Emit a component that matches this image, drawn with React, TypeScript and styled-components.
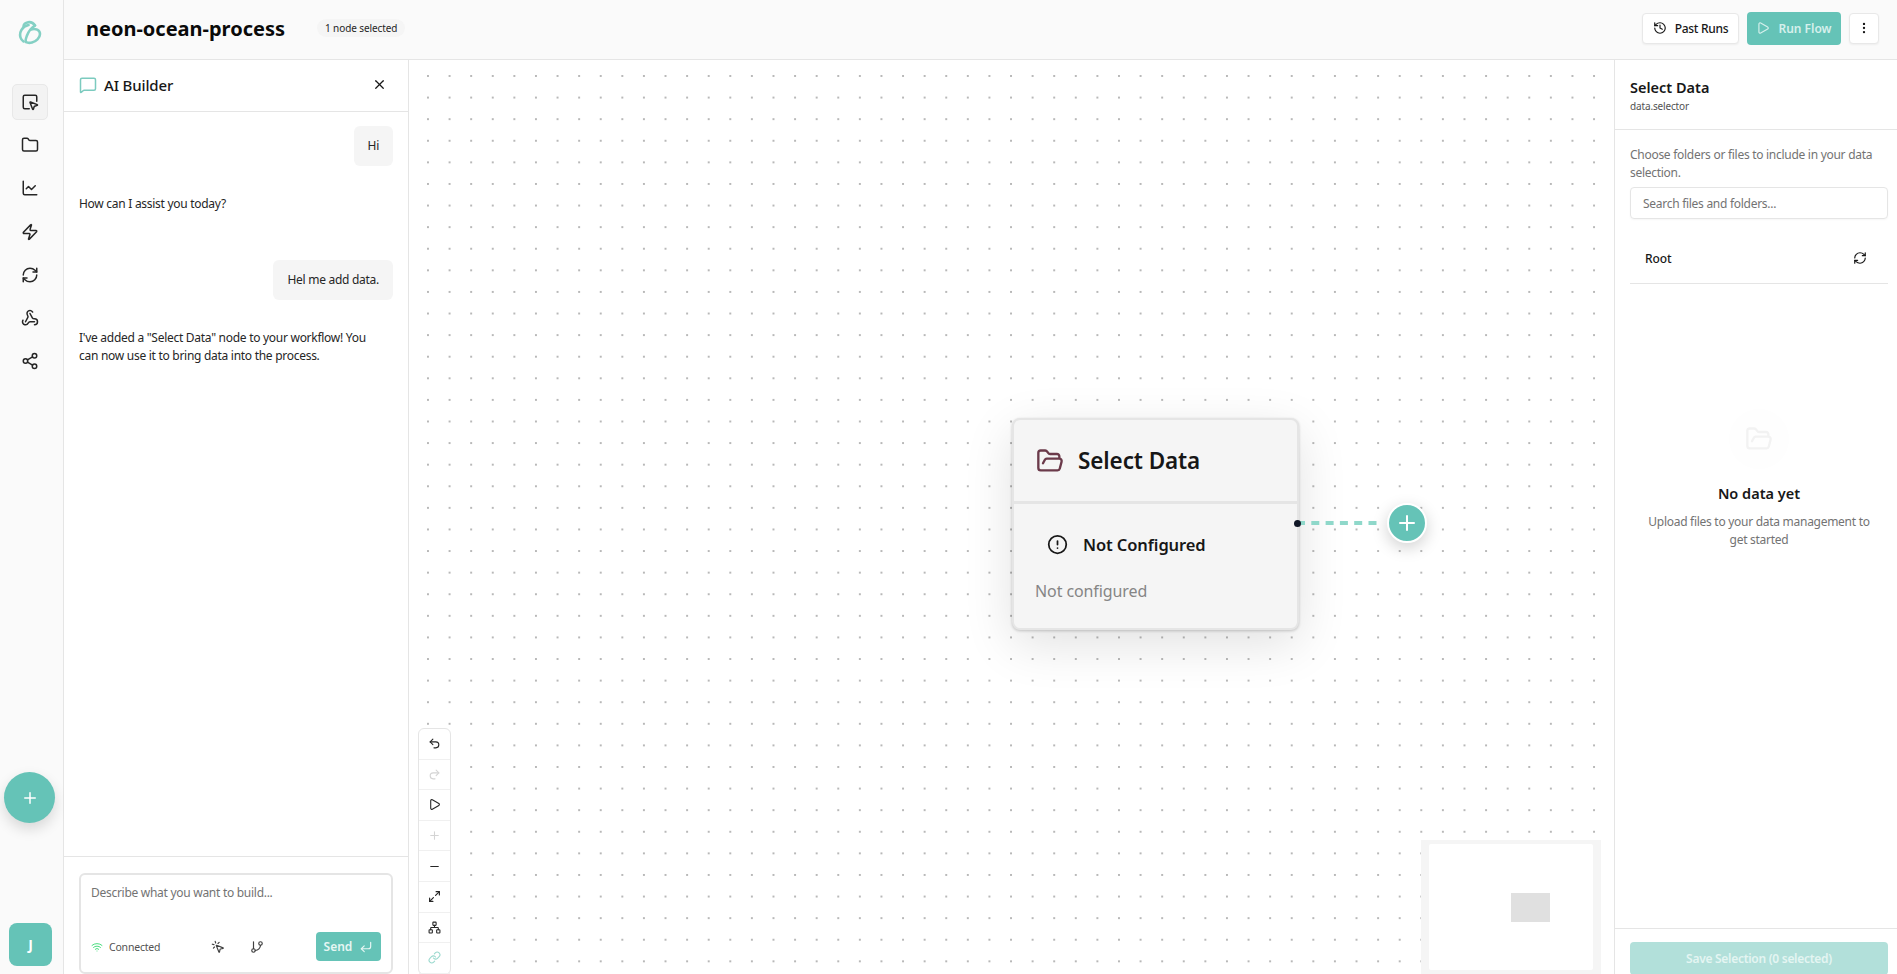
import React from "react"
import styled, { createGlobalStyle } from "styled-components"
import {
  ChartLine,
  CircleAlert,
  CornerDownLeft,
  EllipsisVertical,
  Folder,
  FolderOpen,
  GitBranch,
  History,
  Link,
  MessageSquare,
  Minus,
  MousePointerClick,
  Network,
  Play,
  Plus,
  Redo2,
  RefreshCw,
  Share2,
  SquareMousePointer,
  Undo2,
  Webhook,
  Wifi,
  X,
  Zap,
} from "lucide-react"

const teal = "#65c3b7"
const tight = "-0.28px"

const GlobalStyle = createGlobalStyle`
  html,
  body {
    margin: 0;
    height: 100%;
    overflow: hidden;
    background: #fff;
  }

  * {
    box-sizing: border-box;
  }

  body {
    font-family: "Noto Sans", "Open Sans", sans-serif;
    color: #171717;
  }
`

const Page = styled.div`
  display: flex;
  width: 1897px;
  height: 974px;
  overflow: hidden;
`

const Rail = styled.nav`
  flex: 0 0 64px;
  display: flex;
  flex-direction: column;
  align-items: center;
  background: #fafafa;
  border-right: 1px solid #e5e5e5;
  padding: 19px 0 8px;
`

const Logo = styled.svg`
  width: 24px;
  height: 26px;
  margin-bottom: 39px;
  margin-right: 4px;
`

const RailList = styled.div`
  display: flex;
  flex-direction: column;
  gap: 7.2px;
  margin-right: 3px;
`

const RailButton = styled.button<{ $active?: boolean }>`
  width: 36px;
  height: 36px;
  display: flex;
  align-items: center;
  justify-content: center;
  padding: 0;
  color: #262626;
  background: ${(p) => (p.$active ? "#f3f3f3" : "transparent")};
  border: 1px solid ${(p) => (p.$active ? "#e8e8e8" : "transparent")};
  border-radius: 5px;
`

const Fab = styled.button`
  width: 51px;
  height: 51px;
  margin-top: auto;
  margin-bottom: 100px;
  margin-right: 4px;
  display: flex;
  align-items: center;
  justify-content: center;
  padding: 0;
  color: #fff;
  background: ${teal};
  border: 0;
  border-radius: 50%;
  box-shadow: 0 6px 14px rgba(0, 0, 0, 0.14);
`

const Avatar = styled.div`
  width: 43px;
  height: 43px;
  flex: none;
  margin-right: 2px;
  display: flex;
  align-items: center;
  justify-content: center;
  font-size: 14px;
  font-weight: 700;
  color: #fff;
  background: ${teal};
  border-radius: 8px;
`

const Main = styled.div`
  flex: 1;
  min-width: 0;
  display: flex;
  flex-direction: column;
`

const TopBar = styled.header`
  flex: 0 0 60px;
  display: flex;
  align-items: center;
  padding: 0 18px 3px 22px;
  background: #fafafa;
  border-bottom: 1px solid #e5e5e5;
`

const FlowName = styled.h1`
  margin: 0;
  font-size: 20px;
  font-weight: 700;
  color: #0a0a0a;
`

const SelectionBadge = styled.span`
  margin: 0 0 1px 32px;
  padding: 2px 8px;
  font-size: 10px;
  letter-spacing: -0.1px;
  color: #262626;
  background: #f5f5f5;
  border-radius: 9px;
`

const TopActions = styled.div`
  margin-left: auto;
  display: flex;
  align-items: center;
  gap: 8px;
`

const OutlineButton = styled.button<{ $wide?: boolean }>`
  height: 31px;
  width: ${(p) => (p.$wide ? "97px" : "30px")};
  display: flex;
  align-items: center;
  justify-content: center;
  gap: 8px;
  padding: 0;
  font: 500 12px "Noto Sans", sans-serif;
  letter-spacing: ${tight};
  color: #171717;
  background: #fff;
  border: 1px solid #e8e8e8;
  border-radius: 4px;
  box-shadow: 0 1px 2px rgba(0, 0, 0, 0.05);
`

const RunButton = styled.button`
  width: 94px;
  height: 33px;
  display: flex;
  align-items: center;
  justify-content: center;
  gap: 8px;
  padding: 0;
  font: 600 12px "Noto Sans", sans-serif;
  color: #d6f0ec;
  background: ${teal};
  border: 0;
  border-radius: 4px;
`

const Workspace = styled.div`
  flex: 1;
  min-height: 0;
  display: flex;
`

const ChatPanel = styled.aside`
  flex: 0 0 345px;
  display: flex;
  flex-direction: column;
  background: #fff;
  border-right: 1px solid #e5e5e5;
`

const ChatHeader = styled.div`
  flex: 0 0 52px;
  display: flex;
  align-items: center;
  gap: 7px;
  padding: 0 21px 2px 15px;
  border-bottom: 1px solid #e5e5e5;
`

const ChatTitle = styled.h2`
  flex: 1;
  margin: 0;
  font-size: 15px;
  font-weight: 500;
  letter-spacing: -0.15px;
  color: #171717;
`

const Messages = styled.div`
  flex: 1;
  display: flex;
  flex-direction: column;
  padding: 14px 15px;
`

const UserBubble = styled.div`
  align-self: flex-end;
  padding: 10px 14px;
  height: 40px;
  font-size: 12px;
  letter-spacing: ${tight};
  line-height: 20px;
  color: #262626;
  background: #f5f5f5;
  border-radius: 6px;
`

const BotText = styled.p`
  margin: 29px 0 47px;
  max-width: 296px;
  font-size: 12px;
  letter-spacing: ${tight};
  line-height: 18px;
  color: #262626;
`

const Composer = styled.div`
  flex: 0 0 118px;
  padding: 16px 15px 0;
  border-top: 1px solid #e5e5e5;
`

const InputBox = styled.div`
  height: 101px;
  display: flex;
  flex-direction: column;
  justify-content: space-between;
  padding: 9px 10px 11px;
  border: 2px solid #e5e5e5;
  border-radius: 6px;
`

const Placeholder = styled.span`
  font-size: 12px;
  letter-spacing: ${tight};
  color: #737373;
`

const ComposerRow = styled.div`
  display: flex;
  align-items: center;
`

const Status = styled.span`
  width: 107px;
  display: flex;
  align-items: center;
  gap: 6px;
  font-size: 10.5px;
  letter-spacing: -0.2px;
  color: #525252;
`

const ComposerTool = styled.span`
  width: 39px;
  display: flex;
  justify-content: center;
  color: #404040;
`

const SendButton = styled.button`
  width: 65px;
  height: 29px;
  margin-left: auto;
  display: flex;
  align-items: center;
  justify-content: center;
  gap: 7px;
  padding: 0;
  font: 600 12px "Noto Sans", sans-serif;
  color: #e6f6f3;
  background: ${teal};
  border: 0;
  border-radius: 4px;
`

const Canvas = styled.main`
  position: relative;
  flex: 1;
  min-width: 0;
  overflow: hidden;
  background-color: #fff;
  background-image: radial-gradient(circle, #b8b8b8 0.9px, transparent 1.1px);
  background-size: 21.6px 21.6px;
  background-position: 8.2px 5.2px;
`

const Node = styled.div`
  position: absolute;
  left: 603px;
  top: 358px;
  width: 287px;
  height: 212px;
  display: flex;
  flex-direction: column;
  background: #f5f5f5;
  border: 2px solid #e5e5e5;
  border-radius: 8px;
  box-shadow: 0 1px 3px rgba(0, 0, 0, 0.2), 0 14px 50px rgba(0, 0, 0, 0.12);
`

const NodeHeader = styled.div`
  flex: 0 0 84px;
  display: flex;
  align-items: center;
  gap: 14px;
  padding: 0 22px;
  border-bottom: 3px solid #e5e5e5;
`

const NodeTitle = styled.span`
  font-size: 22.5px;
  font-weight: 600;
  letter-spacing: -0.1px;
  color: #171717;
`

const NodeStatus = styled.div`
  display: flex;
  align-items: center;
  gap: 15px;
  padding: 29px 33px 0;
  font-size: 16.5px;
  font-weight: 600;
  letter-spacing: -0.1px;
  color: #171717;
`

const NodeNote = styled.div`
  padding: 24px 21px 0;
  font-size: 16px;
  letter-spacing: -0.1px;
  color: #858585;
`

const EdgeLine = styled.svg`
  position: absolute;
  left: 888px;
  top: 459px;
  width: 82px;
  height: 8px;
`

const Handle = styled.span`
  position: absolute;
  left: 885px;
  top: 460px;
  width: 7px;
  height: 7px;
  background: #111827;
  border-radius: 50%;
`

const AddNode = styled.button`
  position: absolute;
  left: 978px;
  top: 443px;
  width: 40px;
  height: 40px;
  display: flex;
  align-items: center;
  justify-content: center;
  padding: 0;
  color: #fff;
  background: ${teal};
  border: 2px solid #fff;
  border-radius: 50%;
  box-shadow: 0 5px 16px rgba(0, 0, 0, 0.18);
`

const CanvasTools = styled.div`
  position: absolute;
  left: 9px;
  top: 668px;
  width: 33px;
  background: #fff;
  border: 1px solid #e5e5e5;
  border-radius: 6px;
`

const CanvasTool = styled.div<{ $tone?: string }>`
  height: 30.6px;
  display: flex;
  align-items: center;
  justify-content: center;
  color: ${(p) => p.$tone || "#262626"};
  border-bottom: 1px solid #f0f0f0;
`

const MiniMap = styled.div`
  position: absolute;
  right: 13px;
  bottom: 0;
  width: 180px;
  height: 134px;
  padding: 4px 8px;
  background: #f5f5f5;
`

const MiniMapSheet = styled.div`
  position: relative;
  height: 100%;
  background: #fff;
  border-radius: 2px;
`

const MiniMapNode = styled.div`
  position: absolute;
  left: 82px;
  top: 49px;
  width: 39px;
  height: 29px;
  background: #e0e0e0;
`

const Inspector = styled.aside`
  flex: 0 0 283px;
  display: flex;
  flex-direction: column;
  background: #fff;
  border-left: 1px solid #e5e5e5;
`

const InspectorHeader = styled.div`
  flex: 0 0 70px;
  padding: 17px 15px 0;
  border-bottom: 1px solid #e5e5e5;
`

const InspectorTitle = styled.h2`
  margin: 0;
  font-size: 14.5px;
  line-height: 20px;
  font-weight: 600;
  color: #171717;
`

const InspectorId = styled.div`
  font-size: 10px;
  line-height: 18px;
  letter-spacing: -0.15px;
  color: #525252;
`

const InspectorBody = styled.div`
  flex: 1;
  min-height: 0;
  display: flex;
  flex-direction: column;
  padding: 16px 9px 0 15px;
`

const Hint = styled.p`
  margin: 0 0 5px;
  font-size: 12px;
  letter-spacing: ${tight};
  line-height: 18px;
  color: #737373;
`

const SearchBox = styled.div`
  height: 32px;
  flex: none;
  display: flex;
  align-items: center;
  padding: 0 12px;
  font-size: 12px;
  letter-spacing: ${tight};
  color: #737373;
  border: 1px solid #e5e5e5;
  border-radius: 4px;
  box-shadow: 0 1px 2px rgba(0, 0, 0, 0.04);
`

const RootRow = styled.div`
  flex: 0 0 65px;
  display: flex;
  align-items: center;
  justify-content: space-between;
  padding: 14px 21px 0 15px;
  font-size: 12px;
  letter-spacing: -0.1px;
  font-weight: 500;
  color: #171717;
  border-bottom: 1px solid #e5e5e5;
`

const Empty = styled.div`
  display: flex;
  flex-direction: column;
  align-items: center;
  padding-top: 125px;
  text-align: center;
`

const EmptyIcon = styled.div`
  width: 60px;
  height: 60px;
  display: flex;
  align-items: center;
  justify-content: center;
  color: #f2f2f2;
  background: #fefefe;
  border-radius: 50%;
`

const EmptyTitle = styled.h3`
  margin: 14px 0 10px;
  font-size: 14.5px;
  font-weight: 600;
  color: #171717;
`

const EmptyText = styled.p`
  margin: 0;
  width: 232px;
  font-size: 12px;
  letter-spacing: ${tight};
  line-height: 18px;
  color: #737373;
`

const InspectorFooter = styled.div`
  flex: 0 0 46px;
  min-height: 0;
  overflow: hidden;
  padding: 13px 9px 0 15px;
  border-top: 1px solid #e5e5e5;
`

const SaveButton = styled.button`
  width: 100%;
  height: 33px;
  padding: 0;
  font: 600 12px "Noto Sans", sans-serif;
  letter-spacing: ${tight};
  color: #e4f5f2;
  background: #b2e0da;
  border: 0;
  border-radius: 4px;
`

const FitArrows = () => (
  <svg width="13" height="13" viewBox="0 0 24 24" fill="none" stroke="currentColor" strokeWidth="2.2" strokeLinecap="round" strokeLinejoin="round">
    <path d="M15 3h6v6" />
    <path d="M21 3l-7 7" />
    <path d="M9 21H3v-6" />
    <path d="M3 21l7-7" />
  </svg>
)

const railIcons = [Folder, ChartLine, Zap, RefreshCw, Webhook, Share2]

const tools = [
  { Icon: Undo2 },
  { Icon: Redo2, tone: "#d4d4d4" },
  { Icon: Play },
  { Icon: Plus, tone: "#d4d4d4" },
  { Icon: Minus },
  { Icon: FitArrows },
  { Icon: Network },
  { Icon: Link, tone: "#9ad9ce" },
]

const App = () => (
  <Page>
    <GlobalStyle />
    <Rail>
      <Logo viewBox="-1.5 -1.5 24 26" fill="none" stroke="#84d0c4" strokeWidth="2.6" strokeLinecap="round">
        <path d="M4 6C4.500 1.500 12 -0.500 15.500 5" />
        <path d="M9 4.500C2.500 6 -0.500 12 1 17c.5 1.800 1.500 3 3 4" />
        <path d="M15.500 5C11 8 9 11 7.500 15c-1 2.700-2 5-1 6.500" />
        <path d="M11.500 9C16 7.500 20.500 9.500 20.500 13.500c0 4-4 7.500-8 8.500-2.500.6-4.500.4-6-.5" />
      </Logo>
      <RailList>
        <RailButton $active>
          <SquareMousePointer size={18} />
        </RailButton>
        {railIcons.map((Icon, i) => (
          <RailButton key={i}>
            <Icon size={18} />
          </RailButton>
        ))}
      </RailList>
      <Fab>
        <Plus size={18} />
      </Fab>
      <Avatar>J</Avatar>
    </Rail>

    <Main>
      <TopBar>
        <FlowName>neon-ocean-process</FlowName>
        <SelectionBadge>1 node selected</SelectionBadge>
        <TopActions>
          <OutlineButton $wide>
            <History size={14} />
            <span>Past Runs</span>
          </OutlineButton>
          <RunButton>
            <Play size={14} />
            <span>Run Flow</span>
          </RunButton>
          <OutlineButton>
            <EllipsisVertical size={14} />
          </OutlineButton>
        </TopActions>
      </TopBar>

      <Workspace>
        <ChatPanel>
          <ChatHeader>
            <MessageSquare size={18} color="#7ccbbf" />
            <ChatTitle>AI Builder</ChatTitle>
            <X size={15} />
          </ChatHeader>
          <Messages>
            <UserBubble>Hi</UserBubble>
            <BotText>How can I assist you today?</BotText>
            <UserBubble>Hel me add data.</UserBubble>
            <BotText>
              I've added a "Select Data" node to your workflow! You can now use it to bring data
              into the process.
            </BotText>
          </Messages>
          <Composer>
            <InputBox>
              <Placeholder>Describe what you want to build...</Placeholder>
              <ComposerRow>
                <Status>
                  <Wifi size={12} color="#4ade80" />
                  Connected
                </Status>
                <ComposerTool>
                  <MousePointerClick size={14} />
                </ComposerTool>
                <ComposerTool>
                  <GitBranch size={14} />
                </ComposerTool>
                <SendButton>
                  Send
                  <CornerDownLeft size={14} />
                </SendButton>
              </ComposerRow>
            </InputBox>
          </Composer>
        </ChatPanel>

        <Canvas>
          <Node>
            <NodeHeader>
              <FolderOpen size={28} color="#6b3a4a" />
              <NodeTitle>Select Data</NodeTitle>
            </NodeHeader>
            <NodeStatus>
              <CircleAlert size={21} />
              Not Configured
            </NodeStatus>
            <NodeNote>Not configured</NodeNote>
          </Node>
          <EdgeLine viewBox="0 0 82 8">
            <line x1="0" y1="4" x2="82" y2="4" stroke="#8fd8ca" strokeWidth="4" strokeDasharray="8 6.300" />
          </EdgeLine>
          <Handle />
          <AddNode>
            <Plus size={24} />
          </AddNode>
          <CanvasTools>
            {tools.map(({ Icon, tone }, i) => (
              <CanvasTool key={i} $tone={tone}>
                <Icon size={13} />
              </CanvasTool>
            ))}
          </CanvasTools>
          <MiniMap>
            <MiniMapSheet>
              <MiniMapNode />
            </MiniMapSheet>
          </MiniMap>
        </Canvas>

        <Inspector>
          <InspectorHeader>
            <InspectorTitle>Select Data</InspectorTitle>
            <InspectorId>data.selector</InspectorId>
          </InspectorHeader>
          <InspectorBody>
            <Hint>Choose folders or files to include in your data selection.</Hint>
            <SearchBox>Search files and folders...</SearchBox>
            <RootRow>
              Root
              <RefreshCw size={14} />
            </RootRow>
            <Empty>
              <EmptyIcon>
                <FolderOpen size={28} />
              </EmptyIcon>
              <EmptyTitle>No data yet</EmptyTitle>
              <EmptyText>Upload files to your data management to get started</EmptyText>
            </Empty>
          </InspectorBody>
          <InspectorFooter>
            <SaveButton>Save Selection (0 selected)</SaveButton>
          </InspectorFooter>
        </Inspector>
      </Workspace>
    </Main>
  </Page>
)

export default App
